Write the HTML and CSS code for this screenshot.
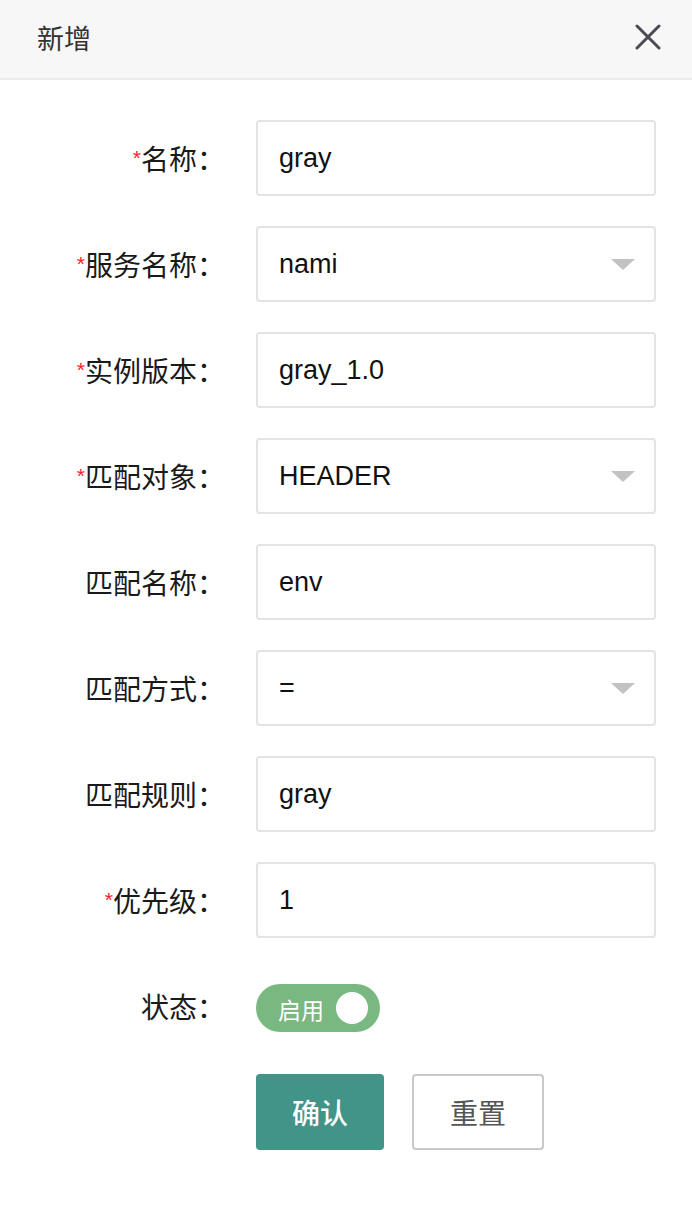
FILE: index.html
```html
<!DOCTYPE html>
<html lang="zh">
<head>
<meta charset="utf-8">
<title>新增</title>
<link rel="stylesheet" href="styles.css">
</head>
<body>
<div class="dialog">
  <div class="dialog-header">
    <span class="dialog-title">新增</span>
    <span class="dialog-close">
      <svg width="26" height="26" viewBox="0 0 26 26"><path d="M2 2 L24 24 M24 2 L2 24" stroke="#4a4a52" stroke-width="3" stroke-linecap="round" fill="none"/></svg>
    </span>
  </div>
  <div class="form">
    <div class="row">
      <label class="label"><span class="req">*</span>名称：</label>
      <div class="field"><span class="value">gray</span></div>
    </div>
    <div class="row">
      <label class="label"><span class="req">*</span>服务名称：</label>
      <div class="field select"><span class="value">nami</span><span class="caret"></span></div>
    </div>
    <div class="row">
      <label class="label"><span class="req">*</span>实例版本：</label>
      <div class="field"><span class="value">gray_1.0</span></div>
    </div>
    <div class="row">
      <label class="label"><span class="req">*</span>匹配对象：</label>
      <div class="field select"><span class="value">HEADER</span><span class="caret"></span></div>
    </div>
    <div class="row">
      <label class="label">匹配名称：</label>
      <div class="field"><span class="value">env</span></div>
    </div>
    <div class="row">
      <label class="label">匹配方式：</label>
      <div class="field select"><span class="value">=</span><span class="caret"></span></div>
    </div>
    <div class="row">
      <label class="label">匹配规则：</label>
      <div class="field"><span class="value">gray</span></div>
    </div>
    <div class="row">
      <label class="label"><span class="req">*</span>优先级：</label>
      <div class="field"><span class="value">1</span></div>
    </div>
    <div class="row">
      <label class="label">状态：</label>
      <div class="switch"><span class="switch-text">启用</span><span class="knob"></span></div>
    </div>
    <div class="row actions">
      <span class="label"></span>
      <div class="buttons">
        <button class="btn btn-primary">确认</button>
        <button class="btn btn-default">重置</button>
      </div>
    </div>
  </div>
</div>
</body>
</html>
```
FILE: styles.css
```css
html, body {
  margin: 0;
  padding: 0;
  background: #fff;
}
body {
  font-family: "Liberation Sans", "Noto Sans CJK SC", sans-serif;
  color: #1a1a1a;
}
.dialog {
  width: 692px;
}
.dialog-header {
  box-sizing: border-box;
  height: 80px;
  background: #f7f7f7;
  border-bottom: 2px solid #ebebeb;
  display: flex;
  align-items: center;
  justify-content: space-between;
  padding: 0 31px 4px 37px;
}
.dialog-title {
  font-family: "Noto Sans CJK SC", sans-serif;
  font-size: 27px;
  color: #333;
}
.dialog-close {
  display: flex;
  width: 26px;
  height: 26px;
}
.form {
  padding-top: 40px;
  display: flex;
  flex-direction: column;
  gap: 30px;
}
.row {
  display: flex;
  align-items: center;
  height: 76px;
}
.label {
  width: 225px;
  text-align: right;
  font-family: "Noto Sans CJK SC", sans-serif;
  font-size: 28px;
  color: #1a1a1a;
  margin-right: 31px;
  flex: none;
}
.req {
  color: #f5222d;
  font-family: "Liberation Sans", sans-serif;
  font-size: 21px;
  vertical-align: 5px;
}
.field {
  box-sizing: border-box;
  width: 400px;
  height: 76px;
  border: 2px solid #e3e3e3;
  border-radius: 4px;
  display: flex;
  align-items: center;
  padding: 0 19px 0 21px;
}
.value {
  font-size: 27px;
  color: #111;
  flex: 1;
}
.caret {
  width: 0;
  height: 0;
  border-left: 12px solid transparent;
  border-right: 12px solid transparent;
  border-top: 11px solid #c2c2c2;
}
.switch {
  box-sizing: border-box;
  width: 124px;
  height: 48px;
  margin-top: 4px;
  border-radius: 24px;
  background: #79b880;
  display: flex;
  align-items: center;
  justify-content: space-between;
  padding: 0 12px 0 22px;
}
.switch-text {
  font-family: "Noto Sans CJK SC", sans-serif;
  font-size: 23px;
  color: #fff;
  padding-top: 2px;
}
.knob {
  width: 32px;
  height: 32px;
  border-radius: 50%;
  background: #fff;
}
.buttons {
  display: flex;
  gap: 28px;
}
.btn {
  box-sizing: border-box;
  height: 76px;
  border-radius: 4px;
  font-family: "Noto Sans CJK SC", sans-serif;
  font-size: 28px;
  padding: 0;
  cursor: pointer;
}
.btn-primary {
  width: 128px;
  background: #439488;
  border: none;
  color: #fff;
  font-weight: 500;
}
.btn-default {
  width: 132px;
  background: #fff;
  border: 2px solid #c9c9c9;
  color: #555;
}
```
